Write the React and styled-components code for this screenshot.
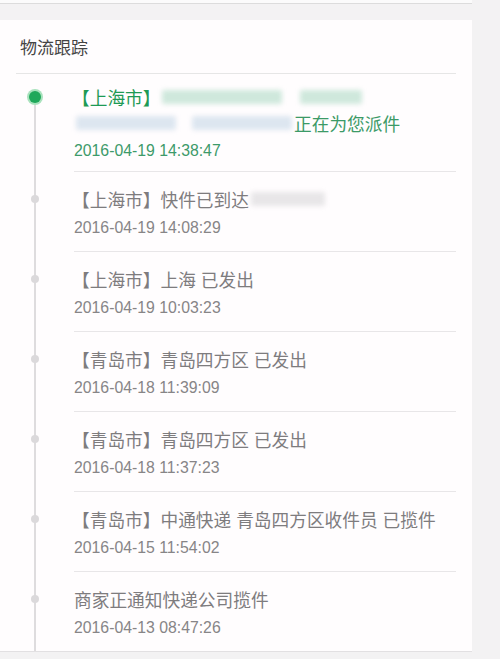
import React from "react";
import styled, { createGlobalStyle } from "styled-components";

const GlobalStyle = createGlobalStyle`
  html, body {
    margin: 0;
    padding: 0;
    background: #f3f2f3;
    font-family: "Liberation Sans", "Noto Sans CJK SC", sans-serif;
  }
`;

const tracks = [
  {
    city: "上海市",
    active: true,
    lines: [
      [{ blur: 120, tone: "green" }, { gap: 14 }, { blur: 62, tone: "green" }],
      [{ blur: 100, tone: "blue" }, { gap: 12 }, { blur: 100, tone: "blue" }, { text: "正在为您派件" }],
    ],
    time: "2016-04-19 14:38:47",
  },
  {
    city: "上海市",
    lines: [[{ text: "快件已到达" }, { blur: 74, tone: "gray" }]],
    time: "2016-04-19 14:08:29",
  },
  { city: "上海市", lines: [[{ text: "上海 已发出" }]], time: "2016-04-19 10:03:23" },
  { city: "青岛市", lines: [[{ text: "青岛四方区 已发出" }]], time: "2016-04-18 11:39:09" },
  { city: "青岛市", lines: [[{ text: "青岛四方区 已发出" }]], time: "2016-04-18 11:37:23" },
  {
    city: "青岛市",
    lines: [[{ text: "中通快递 青岛四方区收件员 已揽件" }]],
    time: "2016-04-15 11:54:02",
  },
  { lines: [[{ text: "商家正通知快递公司揽件" }]], time: "2016-04-13 08:47:26" },
];

export default function App() {
  return (
    <>
      <GlobalStyle />
      <TopStrip />
      <Card>
        <Header>物流跟踪</Header>
        <List>
          {tracks.map((t, i) => (
            <Item key={i}>
              <Marker>
                <Dot $active={t.active} />
              </Marker>
              <Body $first={i === 0} $last={i === tracks.length - 1}>
                {t.lines.map((line, j) => (
                  <Line key={j} $active={t.active}>
                    {j === 0 && t.city && <City $active={t.active}>【{t.city}】</City>}
                    {line.map((part, k) =>
                      part.text ? (
                        <span key={k}>{part.text}</span>
                      ) : part.gap ? (
                        <Gap key={k} style={{ width: part.gap }} />
                      ) : (
                        <Redacted key={k} $tone={part.tone} style={{ width: part.blur }} />
                      )
                    )}
                  </Line>
                ))}
                <Time $active={t.active} $first={i === 0}>{t.time}</Time>
              </Body>
            </Item>
          ))}
        </List>
      </Card>
    </>
  );
}

const TopStrip = styled.div`
  width: 472px;
  height: 3px;
  background: #fbfbfb;
  border-bottom: 1px solid #dcdcdc;
`;

const Card = styled.div`
  width: 472px;
  margin-top: 16px;
  background: #fffdfe;
  border-bottom: 1px solid #e2e0e2;
`;

const Header = styled.div`
  height: 53px;
  margin: 0 16px;
  padding-left: 4px;
  display: flex;
  align-items: center;
  font-size: 17px;
  color: #444;
  border-bottom: 1px solid #e6e6e6;
`;

const List = styled.div`
  position: relative;

  &::before {
    content: "";
    position: absolute;
    left: 34px;
    top: 23px;
    bottom: 0;
    width: 2px;
    background: #dedcde;
  }
`;

const Item = styled.div`
  display: grid;
  grid-template-columns: 74px 1fr;
`;

const Marker = styled.div`
  position: relative;
`;

const Dot = styled.span`
  position: absolute;
  z-index: 1;
  left: ${(p) => (p.$active ? "29px" : "31px")};
  top: ${(p) => (p.$active ? "17px" : "23px")};
  width: ${(p) => (p.$active ? "12px" : "8px")};
  height: ${(p) => (p.$active ? "12px" : "8px")};
  border-radius: 50%;
  background: ${(p) => (p.$active ? "#1fa85a" : "#dbd9db")};
  box-shadow: ${(p) => (p.$active ? "0 0 0 2px #a9e2bd" : "none")};
`;

const Body = styled.div`
  margin-right: 16px;
  padding: ${(p) => (p.$first ? "10px 0 9px 0" : "14px 0 12px 0")};
  border-bottom: ${(p) => (p.$last ? "none" : "1px solid #e8e6e8")};
`;

const Line = styled.div`
  display: flex;
  align-items: center;
  height: 26px;
  font-size: 17.7px;
  color: ${(p) => (p.$active ? "#3c9a67" : "#7e7c7e")};
  white-space: nowrap;
`;

const City = styled.span`
  margin-left: -2px;
  color: ${(p) => (p.$active ? "#1e9a55" : "#7e7c7e")};
`;

const Gap = styled.span`
  display: inline-block;
`;

const Redacted = styled.span`
  display: inline-block;
  height: 14px;
  margin: 0 2px;
  border-radius: 2px;
  filter: blur(2.5px);
  background: ${(p) =>
    p.$tone === "green" ? "#cfe8dc" : p.$tone === "blue" ? "#dde6f0" : "#e8e6e8"};
`;

const Time = styled.div`
  margin-top: ${(p) => (p.$first ? "4px" : "5px")};
  height: 22px;
  line-height: 22px;
  font-size: 15.8px;
  color: ${(p) => (p.$active ? "#3d9a6a" : "#878587")};
`;
